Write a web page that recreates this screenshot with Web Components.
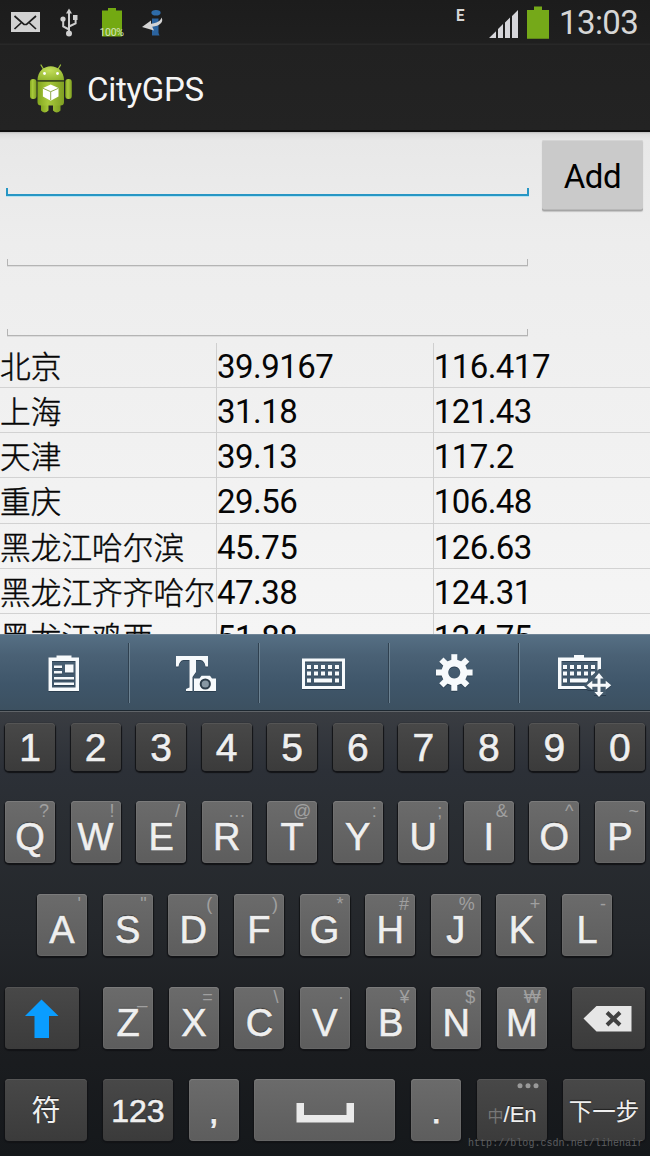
<!DOCTYPE html>
<html lang="zh-CN">
<head>
<meta charset="utf-8">
<title>CityGPS</title>
<style>
	html, body {
		margin: 0;
		width: 650px;
		height: 1156px;
		overflow: hidden;
		background: #eee;
	}
</style>
</head>
<body>
<city-gps-app></city-gps-app>

<script>
// attaches an open shadow root filled with the given markup
function render(el, html) {
	const template = document.createElement('template');
	template.innerHTML = html;
	if (!el.shadowRoot) el.attachShadow({ mode: 'open' });
	el.shadowRoot.replaceChildren(template.content.cloneNode(true));
}

class StatusBar extends HTMLElement {
	connectedCallback() {
		render(this, `
<style>
	:host { display: flex; height: 45px; background: linear-gradient(#1c1c1c, #1f1f1f 43px, #282828 44px); }
	svg { display: block; flex: none; }
	.gap { flex: 1; }
	.time {
		font: 33px/45px Roboto, sans-serif;
		color: #d6d6d6;
		width: 92px;
		text-indent: 1px;
		letter-spacing: -0.6px;
		white-space: nowrap;
	}
</style>
<svg width="50" height="45" viewBox="0 0 50 45">
	<rect x="11" y="12" width="29" height="20" fill="#d2d2d2"/>
	<path d="M14.5 16 24 24.5h2.5L36 16M14.5 29l6.5-6M36 29l-6.5-6" fill="none" stroke="#1d1d1d" stroke-width="1.7"/>
</svg>
<svg width="45" height="45" viewBox="50 0 45 45">
	<g fill="none" stroke="#cfcfcf" stroke-width="2">
		<path d="M69 12v21M69 29.5l-5.800-3V20M69 26.500l6.600-3.200V18"/>
	</g>
	<path d="M69 8.500l3 5h-6z" fill="#cfcfcf"/>
	<circle cx="69" cy="33.400" r="3" fill="#cfcfcf"/>
	<circle cx="63" cy="19" r="2.600" fill="#cfcfcf"/>
	<path d="M73 15h4.500v5H73z" fill="#cfcfcf"/>
</svg>
<svg width="35" height="45" viewBox="95 0 35 45">
	<path d="M102 10.500h6V8h8v2.500h6V36.500h-20z" fill="#73a912"/>
	<text x="99.500" y="36" textLength="24.500" font-family="Roboto, sans-serif" font-size="10.500" fill="#d6e2bd">100%</text>
</svg>
<svg width="50" height="45" viewBox="130 0 50 45">
	<ellipse cx="156" cy="12.700" rx="4.600" ry="2.800" fill="#2e6caa"/>
	<path d="M152 18.500h6.500V33l1 2.500h-7.500z" fill="#2b639e"/>
	<path d="M161.500 17.500c2.700 4.500-2 8.700-9.300 9.200l1.800 3.800-12-3.400 9-6.500v3.200c5.500-.5 9.500-2.800 10.500-6.300z" fill="#d4d4d4"/>
</svg>
<span class="gap"></span>
<svg width="40" height="45" viewBox="440 0 40 45">
	<text x="456" y="20.500" textLength="8.500" font-family="Roboto, sans-serif" font-weight="700" font-size="17" fill="#d6d6d6" lengthAdjust="spacingAndGlyphs">E</text>
</svg>
<svg width="42" height="45" viewBox="480 0 42 45">
	<path d="M489 38l7-6.800V38zM498 38V29l5-5v14zM505 38V22.500l5-5V38zM512 38V16l6-6v28z" fill="#d6d6da"/>
</svg>
<svg width="36" height="45" viewBox="522 0 36 45">
	<path d="M527 10h7V6.500h8V10h7v28.700h-22z" fill="#75a919"/>
</svg>
<span class="time">13:03</span>`);
	}
}
customElements.define('status-bar', StatusBar);

class ActionBar extends HTMLElement {
	connectedCallback() {
		render(this, `
<style>
	:host {
		display: flex;
		height: 87px;
		box-sizing: border-box;
		border-bottom: 2px solid #111;
		background: linear-gradient(#212121, #232323);
	}
	.title { font: 33px/90px Roboto, sans-serif; letter-spacing: -0.3px; color: #f5f5f5; margin-left: -1px; }
	svg { display: block; width: 88px; height: 85px; }
</style>
<svg viewBox="0 45 88 85">
	<defs>
		<linearGradient id="body" x2="1"><stop stop-color="#83a61f"/><stop offset=".4" stop-color="#a9ca3c"/><stop offset="1" stop-color="#7f9f22"/></linearGradient>
		<radialGradient id="head" cx=".45" cy=".3" r=".8"><stop stop-color="#c3de5a"/><stop offset="1" stop-color="#8cb02a"/></radialGradient>
	</defs>
	<path d="M44 70l-3-5M57.500 70l3-5" stroke="#9cbd3c" stroke-width="1.300" stroke-linecap="round"/>
	<g fill="url(#body)">
		<rect x="30" y="79" width="6.500" height="20" rx="3"/>
		<rect x="65.300" y="79" width="6.500" height="20" rx="3"/>
		<path d="M41 99h7.500v11.500q-3.700 4-7.500 0zM53 99h7.500v11.500q-3.700 4-7.500 0z"/>
		<path d="M37.500 81.500h26.500V102q0 3.500-3.500 3.500H41q-3.500 0-3.500-3.500z"/>
	</g>
	<path d="M37.500 80.300c0-18.800 26.500-18.800 26.500 0z" fill="url(#head)"/>
	<path d="M37.500 81.300h26.500" stroke="#4c611c"/>
	<circle cx="44.500" cy="73.500" r="1.400" fill="#fff"/>
	<circle cx="57.500" cy="73.500" r="1.400" fill="#fff"/>
	<path d="M50.700 84.500l7.800 3.500v8.500l-7.800 4.200-7.800-4.200V88z" fill="#fff"/>
	<path d="M43 88.300l7.700 3.400 7.700-3.400M50.700 91.700v8.500" fill="none" stroke="#91ab4b"/>
</svg>
<span class="title">CityGPS</span>`);
	}
}
customElements.define('action-bar', ActionBar);

// holo style text field: underline with a short tick at each end
class HoloField extends HTMLElement {
	connectedCallback() {
		render(this, `
<style>
	:host { display: flex; align-items: flex-end; }
	.line { flex: 1; height: 7px; margin: 0 1px; border: 1px solid #b4b4b4; border-top: 0; border-bottom-width: 1px; box-shadow: 0 1px #dcdcdc; box-sizing: border-box; }
	:host([focused]) .line { height: 8px; margin: 0; border: 2px solid #2796c4; border-top: 0; box-shadow: 0 1px #b5e3f2; }
</style>
<div class="line"></div>`);
	}
}
customElements.define('holo-field', HoloField);

class HoloButton extends HTMLElement {
	connectedCallback() {
		render(this, `
<style>
	:host { display: block; }
	button {
		display: block;
		width: 101px;
		height: 71px;
		padding: 1px 0 0;
		border: none;
		border-radius: 2px;
		background: #cacaca;
		box-shadow: inset 0 1px #d5d5d5, inset 0 -1.500px #a5a5a5, 0 1px 1px #c4c4c4;
		font: 33px Roboto, sans-serif;
		letter-spacing: -0.4px;
		color: #000;
	}
</style>
<button><slot></slot></button>`);
	}
}
customElements.define('holo-button', HoloButton);

class CityRow extends HTMLElement {
	connectedCallback() {
		render(this, `
<style>
	:host {
		display: grid;
		grid-template-columns: 216px 216.700px 1fr;
		height: 45.150px;
		box-sizing: border-box;
		border-bottom: 1px solid #d2d2d2;
		font: 33px/48px Roboto, "Noto Sans CJK SC", sans-serif;
		color: #060606;
	}
	div { white-space: nowrap; height: 100%; }
	.name {
		font: 300 30.700px/44px "Noto Sans CJK SC", sans-serif;
		-webkit-text-stroke: 0.450px #060606;
	}
	.num { border-left: 1px solid #cfcfcf; letter-spacing: -0.540px; }
</style>
<div class="name"><slot></slot></div>
<div class="num">${this.getAttribute('lat')}</div>
<div class="num">${this.getAttribute('lng')}</div>`);
	}
}
customElements.define('city-row', CityRow);

const KEYBOARD_DOTS = `
	<path d="M307 665h4v4h-4zM314 665h4v4h-4zM321 665h4v4h-4zM328 665h4v4h-4zM335 665h4v4h-4zM307 671.500h4v4h-4zM314 671.500h4v4h-4zM321 671.500h4v4h-4zM328 671.500h4v4h-4zM335 671.500h4v4h-4zM307 678.500h4v4h-4zM314 678.500h18v4h-18zM335 678.500h4v4h-4z"/>`;

class KeyboardTools extends HTMLElement {
	connectedCallback() {
		let teeth = '';
		for (let a = 0; a < 360; a += 45) {
			teeth += `<path d="M451.300 654.200h6v8h-6z" transform="rotate(${a} 454.300 672.500)"/>`;
		}
		render(this, `
<style>
	:host {
		display: grid;
		grid-template-columns: repeat(5, 130px);
		height: 77px;
		background: linear-gradient(#567085, #4a6175 28%, #3f566a 65%, #3c5060);
		box-shadow: inset 0 1px #6f8496, inset 0 -1px #1e2830;
	}
	svg { display: block; width: 130px; height: 77px; fill: #f7fafc; filter: drop-shadow(0 1px 0 rgba(20, 35, 50, .45)); }
	.cell { background: linear-gradient(90deg, #2f404f 50%, #6c8292 50%) 128px 9px / 2px 60px no-repeat; }
	.cell:last-child { background: none; }
</style>
<div class="cell"><svg viewBox="0 634 130 77">
	<path fill-rule="evenodd" d="M48.500 657.500h8v-2h15v2h7.500V691H48.500zM52 661v26.500h23.500V661z"/>
	<path d="M54 665.500h8v2.500h-8zM54 671h8v2.500h-8zM65 664.500h8.500v8H65zM54 677h20v2.500H54zM54 682.500h20v2.500H54z"/>
</svg></div>
<div class="cell"><svg viewBox="130 634 130 77">
	<path d="M176 656h32v10.500h-2.500q-1-6-5-6.500H196v12l-3.500 5V691H186v-2l3.500-1.500V660H183.500q-4 .5-5 6.500H176z"/>
	<path d="M194 678.500h5.500l2-2.800h8.500l2 2.800h4V691h-22z"/>
	<circle cx="205.300" cy="684" r="5.600" fill="#2d3d4a"/>
	<circle cx="205.300" cy="684" r="3.600" fill="#8797a3"/>
</svg></div>
<div class="cell"><svg viewBox="260 634 130 77">
	<path fill-rule="evenodd" d="M302 658.500h43V689h-43zM305 661.500v24.500h37v-24.500z"/>
	${KEYBOARD_DOTS}
</svg></div>
<div class="cell"><svg viewBox="390 634 130 77">
	<path fill-rule="evenodd" d="M454.300 659.500a13 13 0 1 0 .1 0zM454.300 666.500a6 6 0 1 1-.1 0z"/>
	${teeth}
</svg></div>
<div class="cell"><svg viewBox="520 634 130 77">
	<path fill-rule="evenodd" d="M558 657.500h16v-2.500h10v2.500h17V689h-43zM561.500 661v25h36v-25z"/>
	<g transform="translate(256 0)">${KEYBOARD_DOTS}</g>
	<path d="M599 669l-6 5.500-7 8.500-2 3 4 4h6v5h12v-26z" fill="#445a6c"/>
	<path d="M599 673l4.500 5.500h-3v5.200h5.200v-3l5.500 4.500-5.500 4.500v-3h-5.200v5.300h3L599 697l-4.500-5h3v-5.300h-5.200v3l-5.500-4.500 5.500-4.500v3h5.200v-5.200h-3z"/>
</svg></div>`);
	}
}
customElements.define('keyboard-tools', KeyboardTools);

// one key; the slot takes a letter or a drawn icon, "hint" is the long-press symbol
class KeyCap extends HTMLElement {
	connectedCallback() {
		const hint = this.getAttribute('hint');
		render(this, `
<style>
	:host {
		display: block;
		position: relative;
		flex: none;
		width: var(--w, 50px);
		height: var(--h, 62px);
		border-radius: 4px;
		background: linear-gradient(#6b6b6b, #5d5d5d);
		box-shadow: inset 0 1px #7b7b7b, inset 0 0 0 1px rgba(255, 255, 255, .05), 0 1px 1px 1px #121316;
		font: var(--fs, 38px)/var(--lh, 73px) "Liberation Sans", "Noto Sans CJK SC", sans-serif;
		color: #efefef;
		text-align: center;
		text-shadow: 0 -1px 1px rgba(0, 0, 0, .5);
		white-space: nowrap;
	}
	:host([dark]) { background: linear-gradient(#484848, #3b3b3b); box-shadow: inset 0 1px #555, 0 1px 1px 1px #121316; }
	.label { -webkit-text-stroke: var(--stroke, 0.600px) #efefef; }
	.hint {
		position: absolute;
		top: 0;
		right: 6px;
		font-size: 18px;
		line-height: 21px;
		color: #a0a0a0;
		text-shadow: none;
	}
</style>
<div class="label"><slot></slot></div>
${hint ? `<span class="hint">${hint}</span>` : ''}`);
	}
}
customElements.define('key-cap', KeyCap);

class SoftKeyboard extends HTMLElement {
	connectedCallback() {
		const keys = (labels, hints) => [...labels].map((c, i) =>
			`<key-cap${hints ? ` hint="${hints[i]}"` : ' dark'}>${c}</key-cap>`).join('');
		render(this, `
<style>
	:host {
		display: flex;
		flex-direction: column;
		box-sizing: border-box;
		height: 445px;
		padding: 12px 5px 0;
		background: linear-gradient(#3a3d42, #2c3037 60px, #2a2e33 100px, #24272b 220px, #1b1d20 330px, #15181b);
		box-shadow: inset 0 1px #606468;
	}
	.row { display: flex; justify-content: space-between; height: 62px; margin-bottom: 31px; }
	.row.third { margin-bottom: 30.400px; }
	.digits { --h: 48px; --lh: 50px; --fs: 39px; height: 48px; margin-bottom: 30px; }
	.middle { padding: 0 33px 0 32px; }
	.letters { display: flex; gap: 15.600px; }
	svg { display: block; }
	.dots { position: absolute; top: 3px; right: 7px; }
	.cn { font-size: 16px; color: #777; -webkit-text-stroke: 0; text-shadow: none; }
	footer {
		position: absolute;
		left: 468px;
		top: 1137px;
		font: 10px/14px "Liberation Mono", monospace;
		letter-spacing: 0.040px;
		color: #5c5e60;
	}
</style>
<div class="row digits">${keys('1234567890')}</div>
<div class="row">${keys('QWERTYUIOP', ['?', '!', '/', '…', '@', ':', ';', '&amp;', '^', '~'])}</div>
<div class="row middle">${keys('ASDFGHJKL', ["'", '&quot;', '(', ')', '*', '#', '%', '+', '-'])}</div>
<div class="row third">
	<key-cap dark style="--w:73.500px"><svg width="73" height="62" viewBox="5 987 73 62"><path d="M41.500 999.500l17 16.500H49v22H34.500v-22H25z" fill="#0a9dff"/></svg></key-cap>
	<div class="letters">${keys('ZXCVBNM', ['_', '=', '\\', '·', '¥', '$', '₩'])}</div>
	<key-cap dark style="--w:73.500px"><svg width="73" height="62" viewBox="571.500 987 73 62"><path d="M583 1018.500l13-12.500h35v25.500h-35z" fill="#e6e6e6"/><path d="M606.500 1012.500l13 12.500M619.500 1012.500l-13 12.500" stroke="#414141" stroke-width="4"/></svg></key-cap>
</div>
<div class="row">
	<key-cap dark style="--w:82px;--fs:29px;--lh:65px;--stroke:0">符</key-cap>
	<key-cap dark style="--w:70.500px;--fs:32px;--lh:65px">123</key-cap>
	<key-cap style="--fs:34px;--lh:65px;--stroke:1px">,</key-cap>
	<key-cap style="--w:141px"><svg width="141" height="62" viewBox="255 1079 141 62"><path d="M297.500 1103h7.500v12h42.500v-12h7.500v19.500h-57.500z" fill="#eaeaea"/></svg></key-cap>
	<key-cap style="--fs:34px;--lh:65px;--stroke:1px">.</key-cap>
	<key-cap dark style="--w:70.500px;--fs:22px;--lh:71px;--stroke:.1px"><span class="cn">中</span>/En<svg class="dots" width="24" height="8"><g fill="#999"><circle cx="4" cy="3.800" r="2.500"/><circle cx="12" cy="3.800" r="2.500"/><circle cx="20" cy="3.800" r="2.500"/></g></svg></key-cap>
	<key-cap dark style="--w:82px;--fs:23.500px;--lh:66px;--stroke:0">下一步</key-cap>
</div>
<footer>http://blog.csdn.net/lihenair</footer>`);
	}
}
customElements.define('soft-keyboard', SoftKeyboard);

class CityGpsApp extends HTMLElement {
	connectedCallback() {
		render(this, `
<style>
	:host { display: flex; flex-direction: column; width: 650px; height: 1156px; overflow: hidden; position: relative; }
	main {
		height: 502px;
		overflow: hidden;
		background: linear-gradient(#bdbdbd, #dedede 2px, #e8e8e8 8px, #ededed 110px, #f5f5f5);
	}
	.form { display: flex; justify-content: space-between; height: 211px; padding: 0 7px 0 6px; box-sizing: border-box; }
	.fields { width: 522.500px; display: flex; flex-direction: column; }
	holo-field { height: 70px; }
	holo-field[focused] { height: 64px; }
	holo-button { padding-top: 8px; }
</style>
<status-bar></status-bar>
<action-bar></action-bar>
<main>
	<div class="form">
		<div class="fields">
			<holo-field focused></holo-field>
			<holo-field></holo-field>
			<holo-field></holo-field>
		</div>
		<holo-button>Add</holo-button>
	</div>
	<city-row lat="39.9167" lng="116.417">北京</city-row>
	<city-row lat="31.18" lng="121.43">上海</city-row>
	<city-row lat="39.13" lng="117.2">天津</city-row>
	<city-row lat="29.56" lng="106.48">重庆</city-row>
	<city-row lat="45.75" lng="126.63">黑龙江哈尔滨</city-row>
	<city-row lat="47.38" lng="124.31">黑龙江齐齐哈尔</city-row>
	<city-row lat="51.88" lng="124.75">黑龙江鸡西</city-row>
</main>
<keyboard-tools></keyboard-tools>
<soft-keyboard></soft-keyboard>`);
	}
}
customElements.define('city-gps-app', CityGpsApp);
</script>
</body>
</html>
